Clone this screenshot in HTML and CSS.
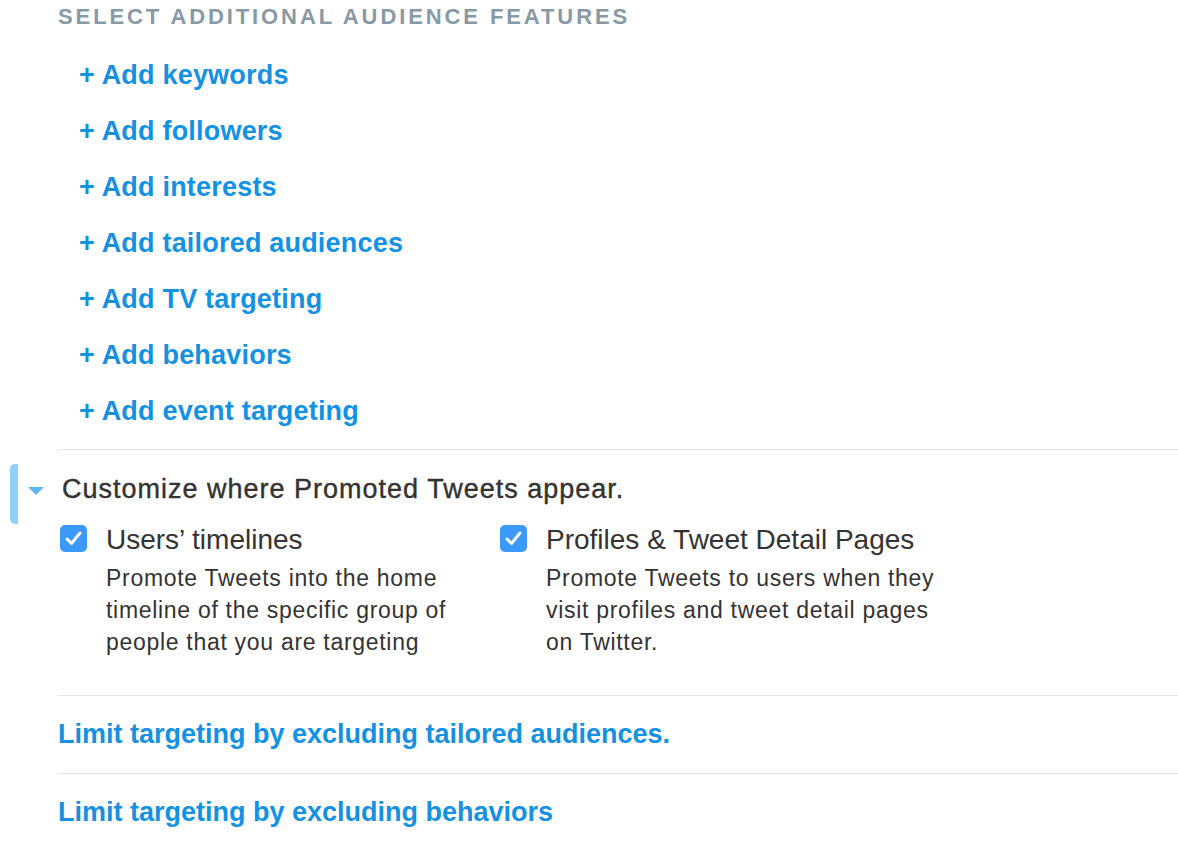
FILE: index.html
```html
<!DOCTYPE html>
<html lang="en">
<head>
    <meta charset="UTF-8">
    <meta name="viewport" content="width=device-width, initial-scale=1.0">
    <title>Audience Features</title>
    <link rel="stylesheet" href="styles.css">
</head>
<body>
    <div class="targeting">
        <h3 class="section-title">Select additional audience features</h3>
        <ul class="add-list">
            <li><a href="#">+ Add keywords</a></li>
            <li><a href="#">+ Add followers</a></li>
            <li><a href="#">+ Add interests</a></li>
            <li><a href="#">+ Add tailored audiences</a></li>
            <li><a href="#">+ Add TV targeting</a></li>
            <li><a href="#">+ Add behaviors</a></li>
            <li><a href="#">+ Add event targeting</a></li>
        </ul>

        <div class="placement">
            <span class="active-bar"></span>
            <h4 class="placement-title"><span class="caret"></span>Customize where Promoted Tweets appear.</h4>
            <div class="options">
                <label class="option">
                    <span class="check"><svg viewBox="0 0 27 27" width="27" height="27"><path d="M7 14l4.5 4.5L20 8" fill="none" stroke="#fff" stroke-width="3" stroke-linecap="round" stroke-linejoin="round"/></svg></span>
                    <span class="option-body">
                        <span class="option-name">Users’ timelines</span>
                        <span class="option-desc">Promote Tweets into the home timeline of the specific group of people that you are targeting</span>
                    </span>
                </label>
                <label class="option">
                    <span class="check"><svg viewBox="0 0 27 27" width="27" height="27"><path d="M7 14l4.5 4.5L20 8" fill="none" stroke="#fff" stroke-width="3" stroke-linecap="round" stroke-linejoin="round"/></svg></span>
                    <span class="option-body">
                        <span class="option-name">Profiles &amp; Tweet Detail Pages</span>
                        <span class="option-desc">Promote Tweets to users when they visit profiles and tweet detail pages on Twitter.</span>
                    </span>
                </label>
            </div>
        </div>

        <div class="limit-row"><a href="#">Limit targeting by excluding tailored audiences.</a></div>
        <div class="limit-row"><a href="#">Limit targeting by excluding behaviors</a></div>
    </div>
</body>
</html>
```

FILE: styles.css
```css
body {
    font-family: "Liberation Sans", Arial, sans-serif;
    background-color: #fff;
    color: #333;
    margin: 0;
}
a {
    color: #1391e2;
    text-decoration: none;
}
.targeting {
    padding-left: 58px;
}
.section-title {
    margin: 0;
    padding-top: 5px;
    font-size: 22px;
    line-height: 24px;
    font-weight: bold;
    letter-spacing: 2.9px;
    text-transform: uppercase;
    color: #8899a6;
}
.add-list {
    list-style: none;
    margin: 0;
    padding: 18px 0 10px 21px;
    border-bottom: 1px solid #e8e5e8;
}
.add-list li {
    height: 56px;
    line-height: 56px;
}
.add-list a {
    font-size: 27px;
    font-weight: bold;
    letter-spacing: 0.2px;
}
.placement {
    position: relative;
    padding: 24px 0 37px 4px;
    border-bottom: 1px solid #e8e5e8;
}
.active-bar {
    position: absolute;
    left: -48px;
    top: 14px;
    width: 8px;
    height: 60px;
    border-radius: 5px 0 0 5px;
    background-color: #8fd0f7;
}
.placement-title {
    position: relative;
    margin: 0;
    font-size: 27px;
    line-height: 30px;
    font-weight: normal;
    letter-spacing: 1px;
    -webkit-text-stroke: 0.4px #333;
    color: #333;
}
.caret {
    position: absolute;
    left: -34px;
    top: 13px;
    border-left: 8px solid transparent;
    border-right: 8px solid transparent;
    border-top: 8px solid #5fb5ee;
}
.options {
    display: flex;
    padding-top: 20px;
}
.option {
    display: flex;
    gap: 19px;
    width: 440px;
    margin-left: -2px;
}
.option + .option {
    margin-left: 0;
}
.check {
    flex-shrink: 0;
    display: flex;
    align-items: center;
    justify-content: center;
    width: 27px;
    height: 27px;
    margin-top: 1px;
    border-radius: 5px;
    background-color: #3b99fc;
}
.option-body {
    display: flex;
    flex-direction: column;
}
.option-name {
    font-size: 28px;
    line-height: 32px;
    color: #333;
}
.option-desc {
    width: 395px;
    font-size: 23px;
    line-height: 32px;
    letter-spacing: 0.7px;
    margin-top: 6px;
    color: #333;
}
.limit-row {
    height: 77px;
    line-height: 77px;
    border-bottom: 1px solid #e8e5e8;
}
.limit-row:last-child {
    border-bottom: none;
}
.limit-row a {
    font-size: 27px;
    font-weight: bold;
}
```
